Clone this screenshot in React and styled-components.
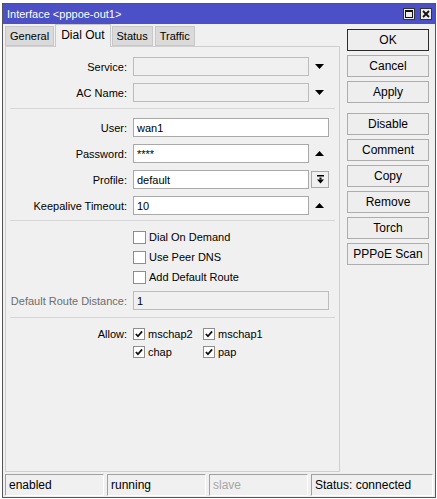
import styled, { createGlobalStyle } from 'styled-components'

const GlobalStyle = createGlobalStyle`
    html, body {
        margin:0;
        padding:0;
        background:#ffffff;
    }
    body {
        font-family:"Liberation Sans", Arial, sans-serif;
        font-size:11px;
        color:#000;
    }
`

const Window = styled.div`
    margin:3px 0 0 2px;
    width:434px;
    height:495px;
    box-sizing:border-box;
    border:1px solid #555;
    background:#f0f0f0;
    display:flex;
    flex-direction:column;
`

const TitleBar = styled.div`
    height:20px;
    background:#4b50c6;
    color:#fff;
    display:flex;
    align-items:center;
    padding:0 3px 0 4px;
`

const Title = styled.span`
    flex:1;
    font-size:11px;
`

const TitleButton = styled.span`
    width:12px;
    height:12px;
    box-sizing:border-box;
    border:1px solid #333;
    background:#ececec;
    margin-left:5px;
    display:flex;
    align-items:center;
    justify-content:center;
`

const Body = styled.div`
    flex:1;
    display:flex;
    padding:0 5px 0 2px;
    gap:7px;
`

const LeftColumn = styled.div`
    width:335px;
    display:flex;
    flex-direction:column;
    padding-bottom:2px;
`

const Tabs = styled.div`
    display:flex;
    height:22px;
    align-items:flex-end;
    position:relative;
    z-index:1;
`

const Tab = styled.div`
    box-sizing:border-box;
    height:${p => p.$active ? '23px' : '20px'};
    margin:${p => p.$active ? '0 1px -1px -1px' : '0 2px 0 0'};
    padding:${p => p.$active ? '3px 5px 0' : '0 4px'};
    background:${p => p.$active ? '#f0f0f0' : '#dadada'};
    border:1px solid #c8c8c8;
    border-bottom:${p => p.$active ? 'none' : '1px solid #c8c8c8'};
    display:flex;
    align-items:${p => p.$active ? 'flex-start' : 'center'};
    font-size:${p => p.$active ? '12px' : '11px'};
`

const Panel = styled.div`
    flex:1;
    border:1px solid #cfcfcf;
    background:#f0f0f0;
    display:flex;
    flex-direction:column;
    padding-top:10px;
`

const Group = styled.div`
    display:flex;
    flex-direction:column;
    gap:${p => p.$gap ?? 7}px;
    margin-top:${p => p.$top ?? 0}px;
`

const Divider = styled.div`
    height:1px;
    background:#d6d6d6;
    margin:${p => p.$top}px 4px ${p => p.$bottom}px 4px;
`

const Row = styled.div`
    display:grid;
    grid-template-columns:127px 176px 20px;
    height:${p => p.$h ?? 19}px;
    align-items:center;
`

const Label = styled.span`
    text-align:right;
    padding-right:6px;
    color:${p => p.$disabled ? '#6d6d6d' : '#000'};
    white-space:nowrap;
    align-self:${p => p.$top ? 'start' : 'center'};
    padding-top:${p => p.$top ? '3px' : '0'};
`

const Input = styled.div`
    grid-column:${p => p.$wide ? '2 / 4' : '2 / 3'};
    height:19px;
    box-sizing:border-box;
    border:1px solid ${p => p.$disabled ? '#bcbcbc' : '#a9a9a9'};
    background:${p => p.$disabled ? '#f0f0f0' : '#fff'};
    display:flex;
    align-items:center;
    padding-left:3px;
    font-size:11px;
`

const Trailing = styled.span`
    display:flex;
    align-items:center;
    justify-content:center;
    padding-left:1px;
`

const SmallButton = styled.span`
    margin-left:2px;
    width:18px;
    height:17px;
    box-sizing:border-box;
    border:1px solid #a9a9a9;
    background:#f0f0f0;
    display:flex;
    align-items:center;
    justify-content:center;
`

const CheckCell = styled.label`
    grid-column:2 / 4;
    display:flex;
    align-items:center;
    gap:3px;
`

const Box = styled.span`
    width:${p => p.$size}px;
    height:${p => p.$size}px;
    box-sizing:border-box;
    border:1px solid #8e8e8e;
    background:#fff;
    display:flex;
    align-items:center;
    justify-content:center;
    flex-shrink:0;
`

const AllowGrid = styled.div`
    grid-column:2 / 4;
    display:grid;
    grid-template-columns:70px 70px;
    grid-auto-rows:18px;
    align-items:center;
`

const AllowItem = styled.span`
    display:flex;
    align-items:center;
    gap:3px;
`

const RightColumn = styled.div`
    display:flex;
    flex-direction:column;
    padding-top:5px;
    gap:4px;
`

const Button = styled.div`
    width:82px;
    height:22px;
    box-sizing:border-box;
    border:1px solid ${p => p.$default ? '#2b2b2b' : '#adadad'};
    background:#eeeeee;
    display:flex;
    align-items:center;
    justify-content:center;
    font-size:12px;
    margin-top:${p => p.$spaced ? '6px' : '0'};
`

const StatusBar = styled.div`
    display:grid;
    grid-template-columns:99px 99px 99px 1fr;
    gap:3px;
    padding:0 2px;
    margin-bottom:1px;
`

const StatusCell = styled.div`
    height:22px;
    box-sizing:border-box;
    border:1px solid #a0a0a0;
    border-right-color:#fff;
    border-bottom-color:#fff;
    display:flex;
    align-items:center;
    padding-left:3px;
    color:${p => p.$muted ? '#a6a6a6' : '#000'};
    font-size:12px;
`

//====================

const DownArrow = () => (
    <svg width="9" height="5" viewBox="0 0 9 5"><path d="M0 0h9L4.5 5z" fill="#000" /></svg>
)

const UpArrow = () => (
    <svg width="9" height="5" viewBox="0 0 9 5"><path d="M4.5 0L9 5H0z" fill="#000" /></svg>
)

const DropIcon = () => (
    <svg width="7" height="9" viewBox="0 0 7 9">
        <rect x="0" y="0" width="7" height="1.5" fill="#000" />
        <rect x="2.5" y="2.5" width="2" height="2" fill="#000" />
        <path d="M0 4.5h7L3.5 8.5z" fill="#000" />
    </svg>
)

const Tick = ({ size }) => (
    <svg width={size - 4} height={size - 4} viewBox="0 0 9 9">
        <path d="M1 4.5l2.3 2.5L8 1.5" fill="none" stroke="#111" strokeWidth="2" />
    </svg>
)

const Check = ({ checked, size = 13 }) => (
    <Box $size={size}>{checked && <Tick size={size} />}</Box>
)

const tabs = ['General', 'Dial Out', 'Status', 'Traffic']

const buttons = [
    { key: 'ok', name: 'OK', isDefault: true },
    { key: 'cancel', name: 'Cancel' },
    { key: 'apply', name: 'Apply' },
    { key: 'disable', name: 'Disable', spaced: true },
    { key: 'comment', name: 'Comment' },
    { key: 'copy', name: 'Copy' },
    { key: 'remove', name: 'Remove' },
    { key: 'torch', name: 'Torch' },
    { key: 'scan', name: 'PPPoE Scan' },
]

const options = ['Dial On Demand', 'Use Peer DNS', 'Add Default Route']

const allow = ['mschap2', 'mschap1', 'chap', 'pap']

//====================

export default function App() {
    return (
        <>
            <GlobalStyle />
            <Window>
                <TitleBar>
                    <Title>Interface &lt;pppoe-out1&gt;</Title>
                    <TitleButton>
                        <svg width="8" height="8" viewBox="0 0 8 8">
                            <rect x="0.5" y="0.5" width="7" height="7" fill="none" stroke="#111" />
                            <rect x="0" y="0" width="8" height="2" fill="#111" />
                        </svg>
                    </TitleButton>
                    <TitleButton>
                        <svg width="8" height="8" viewBox="0 0 8 8">
                            <path d="M1 1l6 6M7 1l-6 6" stroke="#111" strokeWidth="1.8" />
                        </svg>
                    </TitleButton>
                </TitleBar>

                <Body>
                    <LeftColumn>
                        <Tabs>
                            {tabs.map(tab =>
                                <Tab key={tab} $active={tab === 'Dial Out'}>{tab}</Tab>
                            )}
                        </Tabs>
                        <Panel>
                            <Group>
                                <Row>
                                    <Label>Service:</Label>
                                    <Input $disabled />
                                    <Trailing><DownArrow /></Trailing>
                                </Row>
                                <Row>
                                    <Label>AC Name:</Label>
                                    <Input $disabled />
                                    <Trailing><DownArrow /></Trailing>
                                </Row>
                            </Group>

                            <Divider $top={6} $bottom={9} />

                            <Group>
                                <Row>
                                    <Label>User:</Label>
                                    <Input $wide>wan1</Input>
                                </Row>
                                <Row>
                                    <Label>Password:</Label>
                                    <Input>****</Input>
                                    <Trailing><UpArrow /></Trailing>
                                </Row>
                                <Row>
                                    <Label>Profile:</Label>
                                    <Input>default</Input>
                                    <SmallButton><DropIcon /></SmallButton>
                                </Row>
                                <Row>
                                    <Label>Keepalive Timeout:</Label>
                                    <Input>10</Input>
                                    <Trailing><UpArrow /></Trailing>
                                </Row>
                            </Group>

                            <Divider $top={5} $bottom={6} />

                            <Group $gap={0}>
                                {options.map(option =>
                                    <Row key={option} $h={20}>
                                        <span />
                                        <CheckCell><Check /> {option}</CheckCell>
                                    </Row>
                                )}
                            </Group>

                            <Group $top={4}>
                                <Row>
                                    <Label $disabled>Default Route Distance:</Label>
                                    <Input $wide $disabled>1</Input>
                                </Row>
                            </Group>

                            <Divider $top={7} $bottom={7} />

                            <Row $h={36}>
                                <Label $top>Allow:</Label>
                                <AllowGrid>
                                    {allow.map(name =>
                                        <AllowItem key={name}><Check checked size={12} />{name}</AllowItem>
                                    )}
                                </AllowGrid>
                            </Row>
                        </Panel>
                    </LeftColumn>

                    <RightColumn>
                        {buttons.map(button =>
                            <Button key={button.key} $default={button.isDefault} $spaced={button.spaced}>
                                {button.name}
                            </Button>
                        )}
                    </RightColumn>
                </Body>

                <StatusBar>
                    <StatusCell>enabled</StatusCell>
                    <StatusCell>running</StatusCell>
                    <StatusCell $muted>slave</StatusCell>
                    <StatusCell>Status: connected</StatusCell>
                </StatusBar>
            </Window>
        </>
    )
}
